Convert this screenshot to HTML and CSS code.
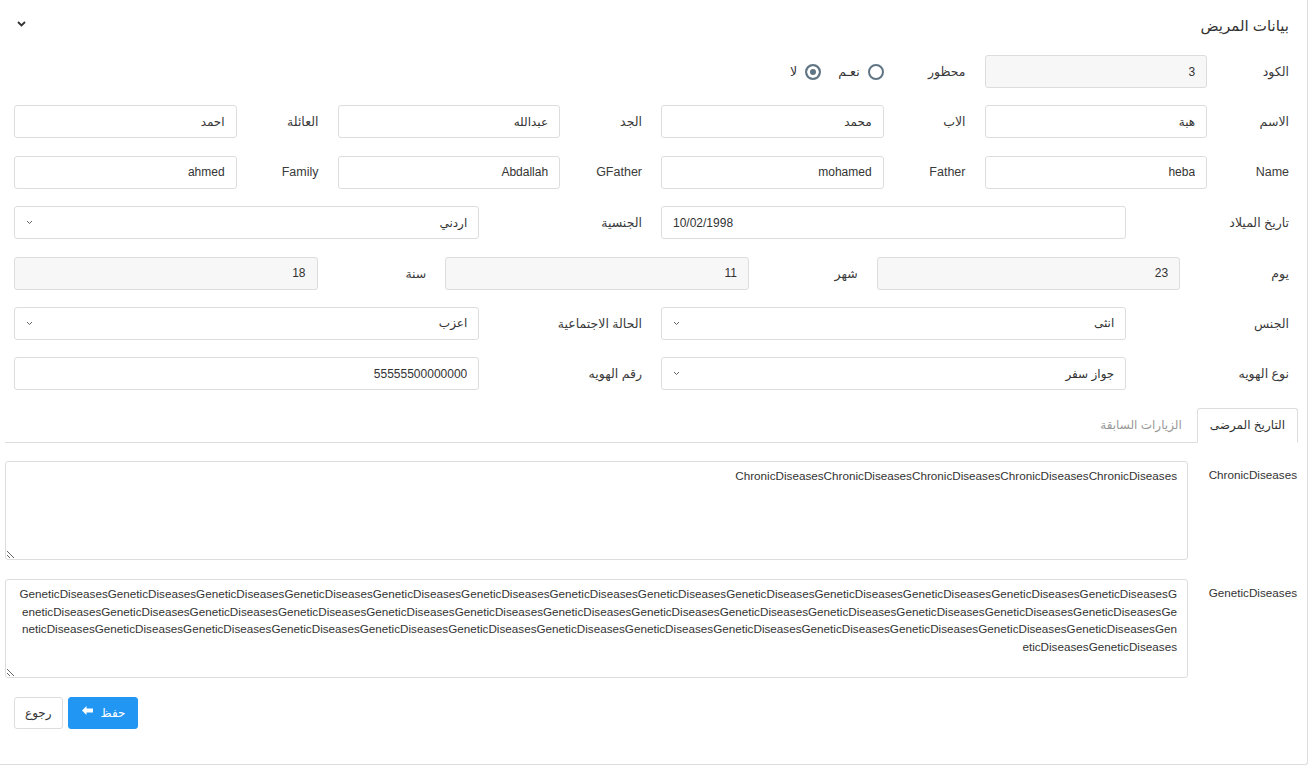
FILE: index.html
```html
<!DOCTYPE html>
<html lang="ar" dir="rtl">
<head>
    <meta charset="UTF-8">
    <meta name="viewport" content="width=device-width, initial-scale=1.0">
    <title>بيانات المريض</title>
    <link rel="stylesheet" href="styles.css">
</head>
<body>

<div class="card">
    <!-- Header -->
    <div class="card-head">
        <h3 class="card-title">بيانات المريض</h3>
        <span class="toggle">
            <svg width="9" height="6" viewBox="0 0 9 6"><path d="M1 1l3.5 3.5L8 1" fill="none" stroke="#333" stroke-width="1.8"/></svg>
        </span>
    </div>

    <!-- Patient form -->
    <div class="form">
        <div class="row">
            <div class="pair w4">
                <label>الكود</label>
                <div class="field"><input class="ctl ro" type="text" value="3" readonly></div>
            </div>
            <div class="pair w4">
                <label>محظور</label>
                <div class="field radios">
                    <span class="opt"><span class="radio"></span>نعـم</span>
                    <span class="opt"><span class="radio on"></span>لا</span>
                </div>
            </div>
        </div>

        <div class="row">
            <div class="pair w4">
                <label>الاسم</label>
                <div class="field"><input class="ctl" type="text" value="هبة"></div>
            </div>
            <div class="pair w4">
                <label>الاب</label>
                <div class="field"><input class="ctl" type="text" value="محمد"></div>
            </div>
            <div class="pair w4">
                <label>الجد</label>
                <div class="field"><input class="ctl" type="text" value="عبدالله"></div>
            </div>
            <div class="pair w4">
                <label>العائلة</label>
                <div class="field"><input class="ctl" type="text" value="احمد"></div>
            </div>
        </div>

        <div class="row">
            <div class="pair w4">
                <label>Name</label>
                <div class="field"><input class="ctl" type="text" value="heba"></div>
            </div>
            <div class="pair w4">
                <label>Father</label>
                <div class="field"><input class="ctl" type="text" value="mohamed"></div>
            </div>
            <div class="pair w4">
                <label>GFather</label>
                <div class="field"><input class="ctl" type="text" value="Abdallah"></div>
            </div>
            <div class="pair w4">
                <label>Family</label>
                <div class="field"><input class="ctl" type="text" value="ahmed"></div>
            </div>
        </div>

        <div class="row">
            <div class="pair w2">
                <label>تاريخ الميلاد</label>
                <div class="field"><input class="ctl date" type="text" value="10/02/1998"></div>
            </div>
            <div class="pair w2">
                <label>الجنسية</label>
                <div class="field select">
                    <select class="ctl"><option>اردني</option></select>
                    <svg class="caret" width="7" height="5" viewBox="0 0 7 5"><path d="M1 1l2.5 2.5L6 1" fill="none" stroke="#666" stroke-width="1"/></svg>
                </div>
            </div>
        </div>

        <div class="row">
            <div class="pair w3">
                <label>يوم</label>
                <div class="field"><input class="ctl ro" type="text" value="23" readonly></div>
            </div>
            <div class="pair w3">
                <label>شهر</label>
                <div class="field"><input class="ctl ro" type="text" value="11" readonly></div>
            </div>
            <div class="pair w3">
                <label>سنة</label>
                <div class="field"><input class="ctl ro" type="text" value="18" readonly></div>
            </div>
        </div>

        <div class="row">
            <div class="pair w2">
                <label>الجنس</label>
                <div class="field select">
                    <select class="ctl"><option>انثى</option></select>
                    <svg class="caret" width="7" height="5" viewBox="0 0 7 5"><path d="M1 1l2.5 2.5L6 1" fill="none" stroke="#666" stroke-width="1"/></svg>
                </div>
            </div>
            <div class="pair w2">
                <label>الحالة الاجتماعية</label>
                <div class="field select">
                    <select class="ctl"><option>اعزب</option></select>
                    <svg class="caret" width="7" height="5" viewBox="0 0 7 5"><path d="M1 1l2.5 2.5L6 1" fill="none" stroke="#666" stroke-width="1"/></svg>
                </div>
            </div>
        </div>

        <div class="row">
            <div class="pair w2">
                <label>نوع الهويه</label>
                <div class="field select">
                    <select class="ctl"><option>جواز سفر</option></select>
                    <svg class="caret" width="7" height="5" viewBox="0 0 7 5"><path d="M1 1l2.5 2.5L6 1" fill="none" stroke="#666" stroke-width="1"/></svg>
                </div>
            </div>
            <div class="pair w2">
                <label>رقم الهويه</label>
                <div class="field"><input class="ctl" type="text" value="55555500000000"></div>
            </div>
        </div>
    </div>

    <!-- Tabs -->
    <ul class="tabs">
        <li class="active"><a>التاريخ المرضى</a></li>
        <li><a>الزيارات السابقة</a></li>
    </ul>

    <div class="tab-body">
        <div class="area-row">
            <label>ChronicDiseases</label>
            <textarea class="ctl area" id="chronic"></textarea>
        </div>
        <div class="area-row">
            <label>GeneticDiseases</label>
            <textarea class="ctl area" id="genetic"></textarea>
        </div>
    </div>

    <div class="actions">
        <button class="btn btn-primary">
            حفظ
            <svg width="11" height="9" viewBox="0 0 11 9"><path d="M0 4.5L4.5 0v2.6H11v3.8H4.5V9z" fill="#fff"/></svg>
        </button>
        <button class="btn btn-default">رجوع</button>
    </div>
</div>

<script>
    // fill the textareas with the saved values
    document.getElementById('chronic').value = 'ChronicDiseases'.repeat(5);
    document.getElementById('genetic').value = 'GeneticDiseases'.repeat(41);
</script>

</body>
</html>
```

FILE: styles.css
```css
body {
    margin: 0;
    font-family: "Liberation Sans", "DejaVu Sans", sans-serif;
    font-size: 12px;
    color: #333;
    background-color: #fff;
}
.card {
    width: 1308px;
    box-sizing: border-box;
    border-right: 1px solid #ddd;
    border-bottom: 1px solid #ddd;
    border-bottom-right-radius: 3px;
    padding-bottom: 35px;
}
.card-head {
    display: flex;
    justify-content: space-between;
    align-items: center;
    height: 52px;
    padding: 0 18px 0 17px;
}
.card-title {
    margin: 0;
    font-size: 15px;
    font-weight: normal;
    color: #333;
}
.toggle {
    display: flex;
    margin-top: -5px;
}
.form {
    padding: 3px 0 0 14px;
    margin-right: -1px;
}
.row {
    display: flex;
    margin-bottom: 17.4px;
}
.row:last-child {
    margin-bottom: 0;
}
.pair {
    display: flex;
    align-items: center;
    box-sizing: border-box;
}
.w4 { width: 25%; }
.w3 { width: 33.333%; }
.w2 { width: 50%; }
.pair label {
    width: calc(25% + 20px);
    padding-right: 19px;
    box-sizing: border-box;
    font-size: 12.5px;
    color: #3a3a3a;
}
.field {
    flex: 1;
    display: flex;
}
.ctl {
    width: 100%;
    height: 33px;
    box-sizing: border-box;
    border: 1px solid #ddd;
    border-radius: 3px;
    padding: 0 11px;
    font-family: inherit;
    font-size: 12px;
    color: #333;
    background-color: #fff;
    outline: none;
}
.ctl.ro {
    background-color: #f7f7f7;
}
.ctl.date {
    direction: ltr;
    text-align: left;
}
.select {
    position: relative;
}
.select select {
    appearance: none;
    -webkit-appearance: none;
}
.select .caret {
    position: absolute;
    left: 12px;
    top: 14px;
}
.radios {
    align-items: center;
    height: 33px;
}
.opt {
    display: flex;
    align-items: center;
    gap: 8px;
    margin-left: 17px;
    font-size: 12.5px;
}
.radio {
    width: 16px;
    height: 16px;
    box-sizing: border-box;
    border: 2px solid #5f7584;
    border-radius: 50%;
}
.radio.on {
    background-color: #5f7584;
    box-shadow: inset 0 0 0 3px #fff;
}
.tabs {
    list-style-type: none;
    display: flex;
    margin: 18px 9px 0 5px;
    padding: 0;
    border-bottom: 1px solid #ddd;
}
.tabs li {
    margin-bottom: -1px;
    margin-left: 2px;
}
.tabs a {
    display: block;
    padding: 0 12px;
    line-height: 33px;
    border: 1px solid transparent;
    border-radius: 3px 3px 0 0;
    font-size: 12px;
    color: #999;
}
.tabs li.active a {
    color: #333;
    background-color: #fff;
    border-color: #ddd #ddd transparent;
}
.tab-body {
    padding: 18px 0 0 5px;
}
.area-row {
    display: flex;
    margin-bottom: 19px;
}
.area-row label {
    width: 119px;
    box-sizing: border-box;
    padding: 7px 10px 0 0;
    font-size: 11.7px;
}
.area {
    flex: 1;
    height: 99px;
    padding: 5px 10px;
    font-size: 11.7px;
    line-height: 17.4px;
    resize: vertical;
}
.actions {
    display: flex;
    justify-content: flex-end;
    gap: 5px;
    padding-left: 14px;
}
.btn {
    display: flex;
    align-items: center;
    gap: 8px;
    height: 32px;
    padding: 0 10px;
    border-radius: 3px;
    font-family: inherit;
    font-size: 12px;
    cursor: pointer;
}
.btn-primary {
    background-color: #2196f3;
    border: 1px solid #2196f3;
    color: #fff;
    padding: 0 12px 0 13px;
}
.btn-primary svg {
    margin-top: -5px;
}
.btn-default {
    background-color: #fff;
    border: 1px solid #ddd;
    color: #333;
}
```
